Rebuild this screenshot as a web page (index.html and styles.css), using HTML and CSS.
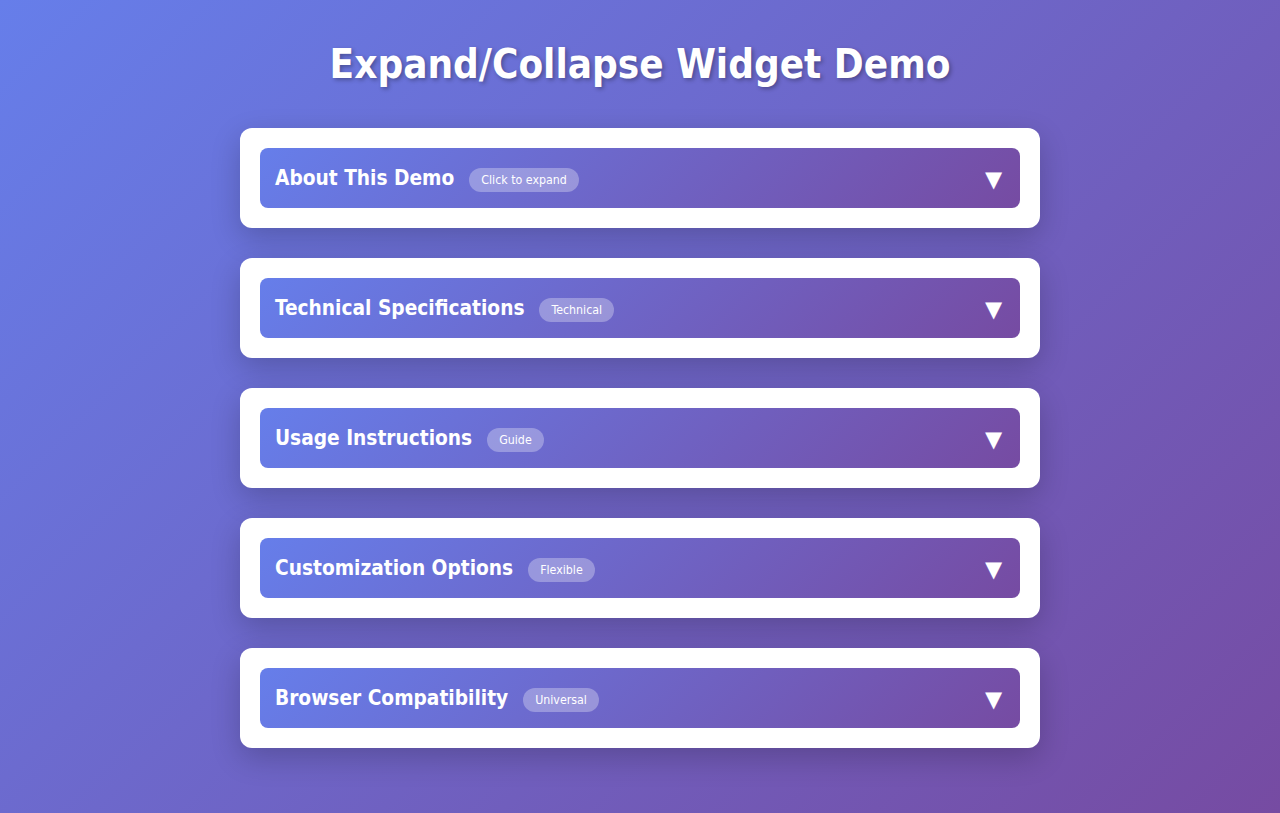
FILE: index.html
```html
<!DOCTYPE html>
<html lang="en">
<head>
<meta charset="utf-8">
<title>Expand/Collapse Widget Demo</title>
<link rel="stylesheet" href="styles.css">
</head>
<body>
<div class="container">
  <h1 class="title">Expand/Collapse Widget Demo</h1>
  <div class="card">
    <div class="header">
      <span class="label">About This Demo</span>
      <span class="badge">Click to expand</span>
      <span class="arrow">▼</span>
    </div>
  </div>
  <div class="card">
    <div class="header">
      <span class="label">Technical Specifications</span>
      <span class="badge">Technical</span>
      <span class="arrow">▼</span>
    </div>
  </div>
  <div class="card">
    <div class="header">
      <span class="label">Usage Instructions</span>
      <span class="badge">Guide</span>
      <span class="arrow">▼</span>
    </div>
  </div>
  <div class="card">
    <div class="header">
      <span class="label">Customization Options</span>
      <span class="badge">Flexible</span>
      <span class="arrow">▼</span>
    </div>
  </div>
  <div class="card">
    <div class="header">
      <span class="label">Browser Compatibility</span>
      <span class="badge">Universal</span>
      <span class="arrow">▼</span>
    </div>
  </div>
</div>
</body>
</html>
```
FILE: styles.css
```css
html, body {
  margin: 0;
  padding: 0;
}
body {
  font-family: "DejaVu Sans Condensed", "DejaVu Sans", sans-serif;
  font-stretch: condensed;
  background: linear-gradient(135deg, #667eea 0%, #764ba2 100%);
  min-height: 813px;
  padding: 20px;
  box-sizing: border-box;
}
.container {
  width: 800px;
  margin: 0 auto;
  display: flex;
  flex-direction: column;
  gap: 30px;
}
.title {
  color: #fff;
  text-align: center;
  font-size: 40px;
  font-weight: bold;
  margin: 20px 0 10px 0;
  line-height: 48px;
  text-shadow: 2px 2px 4px rgba(0,0,0,0.3);
}
.card {
  background: #fff;
  border-radius: 12px;
  padding: 20px;
  box-shadow: 0 10px 30px rgba(0,0,0,0.2);
}
.header {
  height: 60px;
  box-sizing: border-box;
  padding: 0 12px 0 15px;
  border-radius: 8px;
  background: linear-gradient(135deg, #667eea 0%, #764ba2 100%);
  color: #fff;
  display: flex;
  align-items: center;
}
.label {
  font-size: 20.7px;
  font-weight: bold;
}
.badge {
  margin-left: 15px;
  background: rgba(255,255,255,0.3);
  border-radius: 12px;
  font-size: 12.3px;
  padding: 3px 12px;
  line-height: 18px;
  margin-top: 4px;
}
.arrow {
  margin-left: auto;
  font-family: "Liberation Sans", sans-serif;
  font-stretch: normal;
  font-size: 29px;
  line-height: 30px;
  margin-top: 1px;
}
```
